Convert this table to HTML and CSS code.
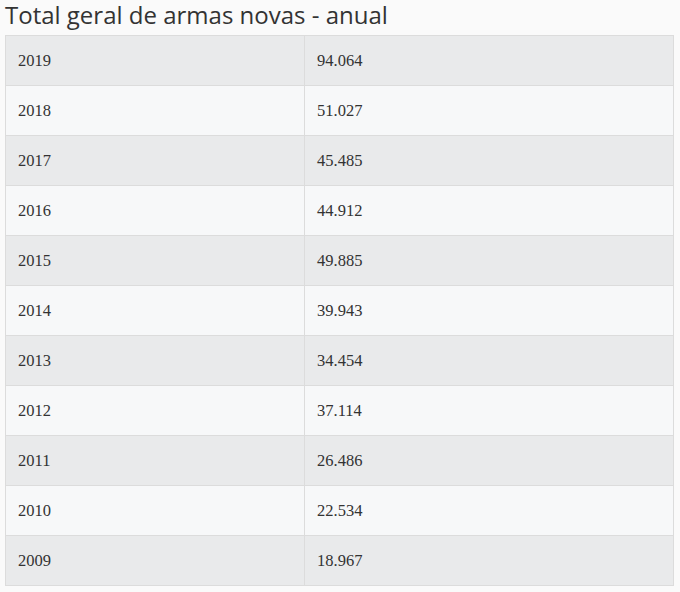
FILE: index.html
```html
<!DOCTYPE html>
<html lang="pt">
<head>
<meta charset="utf-8">
<link rel="stylesheet" href="styles.css">
</head>
<body>
<div class="wrap">
<h2 class="title">Total geral de armas novas - anual</h2>
<table class="data">
<tbody>
<tr><td class="c1">2019</td><td>94.064</td></tr>
<tr><td class="c1">2018</td><td>51.027</td></tr>
<tr><td class="c1">2017</td><td>45.485</td></tr>
<tr><td class="c1">2016</td><td>44.912</td></tr>
<tr><td class="c1">2015</td><td>49.885</td></tr>
<tr><td class="c1">2014</td><td>39.943</td></tr>
<tr><td class="c1">2013</td><td>34.454</td></tr>
<tr><td class="c1">2012</td><td>37.114</td></tr>
<tr><td class="c1">2011</td><td>26.486</td></tr>
<tr><td class="c1">2010</td><td>22.534</td></tr>
<tr><td class="c1">2009</td><td>18.967</td></tr>
</tbody>
</table>
</div>
</body>
</html>
```
FILE: styles.css
```css
html, body {
  margin: 0;
  padding: 0;
  background: #fafafa;
}
.wrap {
  padding: 0 6px 0 5px;
}
.title {
  margin: 0;
  height: 35px;
  font-family: "Open Sans", sans-serif;
  font-weight: 400;
  font-size: 24px;
  line-height: 30px;
  color: #333;
}
.data {
  width: 100%;
  border-collapse: collapse;
  font-family: "Liberation Serif", serif;
  font-size: 16.5px;
  color: #333;
}
.data td {
  border: 1px solid #dcdcdc;
  height: 50px;
  padding: 0 12px;
  box-sizing: border-box;
  vertical-align: middle;
}
.data td.c1 {
  width: 299px;
}
.data tr:nth-child(odd) td {
  background: #e9eaeb;
}
.data tr:nth-child(even) td {
  background: #f7f8f9;
}
```
